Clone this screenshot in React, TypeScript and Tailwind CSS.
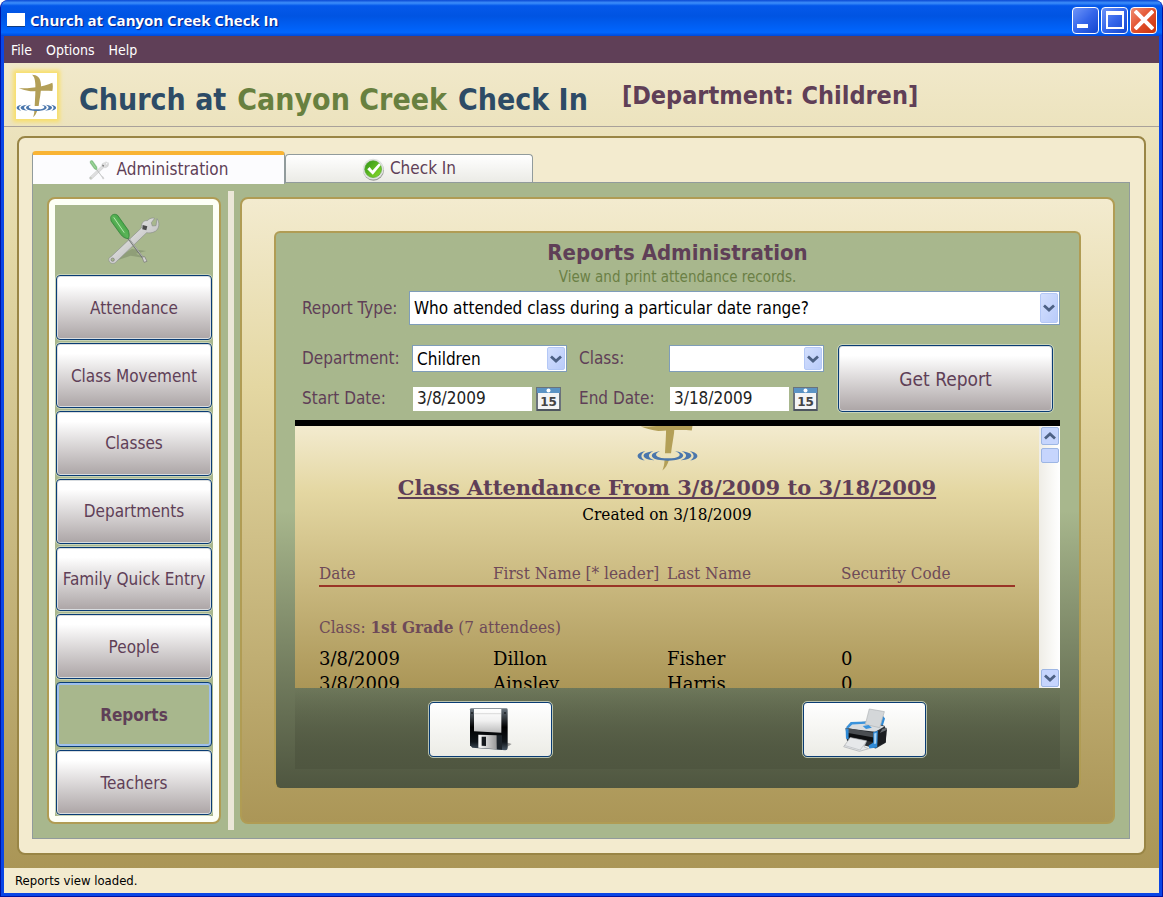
import React, { useState } from "react";

const SANS = "font-['DejaVu_Sans_Condensed','DejaVu_Sans',sans-serif]";

function Cross({ className, viewBox }: { className: string; viewBox: string }) {
  return (
    <svg className={className} viewBox={viewBox} aria-hidden="true">
      <path d="M97 226 C112 226 123 234 124 256 C125 280 119 300 117 320 L105 320 C106 300 108 275 107 255 C106 240 104 232 97 226Z" fill="#b39f57" />
      <path d="M57 267 C90 267 130 264 158 250 C160 256 160 266 158 275 C135 273 110 275 92 276 C80 274 68 271 57 267Z" fill="#b39f57" />
      <path d="M104 334 L113 333 C110 343 106 350 100 354 C103 346 104 340 104 334Z" fill="#b39f57" />
      <g fill="#4a76ac">
        <path d="M95 316 C74 318 72 332 100 334 C106 335 116 335 122 334 C148 331 146 318 125 316 C140 321 136 329 118 330 L104 330 C86 329 82 321 95 316Z" />
        <path d="M82 316 C56 318 56 332 84 334 C70 329 70 321 82 316Z" />
        <path d="M138 316 C164 318 164 332 136 334 C150 329 150 321 138 316Z" />
        <path d="M66 316 C46 319 46 331 65 334 C56 329 56 321 66 316Z" />
        <path d="M154 316 C174 319 174 331 155 334 C164 329 164 321 154 316Z" />
      </g>
    </svg>
  );
}

function Tools({ className, shadow }: { className: string; shadow?: boolean }) {
  return (
    <svg className={className} viewBox="328 98 156 156" aria-hidden="true">
      <defs>
        <linearGradient id="steel" x1="0" y1="0" x2="1" y2="1">
          <stop offset="0" stopColor="#fafafa" />
          <stop offset="1" stopColor="#a9a9a9" />
        </linearGradient>
        <linearGradient id="grip" x1="0" y1="1" x2="1" y2="0">
          <stop offset="0" stopColor="#1f7a2a" />
          <stop offset="0.5" stopColor="#5cb558" />
          <stop offset="1" stopColor="#1f8a2c" />
        </linearGradient>
      </defs>
      {shadow && <path d="M352 232 L400 206 L442 212 L412 220 L442 234 L396 226 L356 240Z" fill="#7f8d6a" opacity="0.6" />}
      <path d="M337 229 L428 143 C427 131 434 119 446 121 C452 114 462 111 468 114 L458 127 L461 137 L472 136 L475 115 C484 126 482 146 470 153 C460 159 450 158 444 157 L353 244 C348 252 335 251 331 242 C329 236 331 231 337 229Z" fill="url(#steel)" stroke="#8b8f8b" strokeWidth="2" />
      <circle cx="342" cy="238" r="5" fill="#a8b78d" stroke="#777" strokeWidth="2" />
      <path d="M432 134 L446 138 L443 150 L431 147Z" fill="#4c4c4c" />
      <path d="M388 173 L434 234" stroke="#6f7370" strokeWidth="5" />
      <path d="M390 174 L434 232" stroke="#d6d8d6" strokeWidth="2" />
      <path d="M430 230 L438 229 L445 243 L436 246Z" fill="#d2d2d2" stroke="#777" strokeWidth="2" />
      <path d="M336 112 C337 102 350 99 357 105 L389 150 C392 160 393 168 389 175 C380 175 372 170 366 162 L337 122Z" fill="url(#grip)" stroke="#267b30" strokeWidth="2" />
      <path d="M346 112 L376 156" stroke="#b5e6ae" strokeWidth="3" strokeLinecap="round" />
    </svg>
  );
}

function CheckBadge() {
  return (
    <svg className="size-[23px]" viewBox="0 0 66 66" aria-hidden="true">
      <defs>
        <linearGradient id="go" x1="0" y1="0" x2="1" y2="1">
          <stop offset="0" stopColor="#2f9416" />
          <stop offset="1" stopColor="#8bdc2b" />
        </linearGradient>
      </defs>
      <circle cx="33" cy="35" r="30" fill="#9a9c98" />
      <circle cx="32" cy="32" r="30" fill="#dfe2df" />
      <circle cx="32" cy="32" r="24" fill="url(#go)" stroke="#52a32e" strokeWidth="2" />
      <path d="M15 32 L22 26 L30 36 L49 15 L54 20 L31 48Z" fill="#fff" />
    </svg>
  );
}

function CalendarIcon() {
  return (
    <svg className="h-6 w-[25px]" viewBox="0 0 25 24" aria-hidden="true">
      <rect x="1" y="1" width="23" height="22" fill="#f3f4f5" stroke="#6a727a" strokeWidth="2" />
      <path d="M1 23 H24" stroke="#4e565e" strokeWidth="2" />
      <rect x="1" y="1" width="23" height="5" fill="#5b93c4" />
      <circle cx="12.500" cy="3.500" r="2" fill="#fff" />
      <text x="12.500" y="19" textAnchor="middle" fontSize="12" fontWeight="bold" fontFamily="DejaVu Sans" fill="#444">15</text>
    </svg>
  );
}

function Floppy() {
  return (
    <svg className="h-11 w-[43px]" viewBox="0 0 129 132" aria-hidden="true">
      <defs>
        <linearGradient id="disk" x1="0" y1="0" x2="0" y2="1">
          <stop offset="0" stopColor="#6b7680" />
          <stop offset="0.45" stopColor="#000" />
          <stop offset="0.8" stopColor="#10151a" />
          <stop offset="1" stopColor="#4a5866" />
        </linearGradient>
        <linearGradient id="label" x1="0" y1="0" x2="0" y2="1">
          <stop offset="0" stopColor="#fff" />
          <stop offset="0.5" stopColor="#f0f0f0" />
          <stop offset="1" stopColor="#bcbcbc" />
        </linearGradient>
        <linearGradient id="shutter" x1="0" y1="0" x2="1" y2="0">
          <stop offset="0" stopColor="#fff" />
          <stop offset="1" stopColor="#999" />
        </linearGradient>
      </defs>
      <path d="M104 124 L128 108 L116 104 L96 112Z" fill="#777" opacity="0.7" />
      <path d="M3 4 Q3 1 7 1 L112 1 Q116 1 116 5 L116 120 Q116 127 109 127 L10 119 L3 112Z" fill="url(#disk)" />
      <path d="M15 3 L97 3 L97 74 L15 70Z" fill="url(#label)" />
      <path d="M16 17 H96" stroke="#ccc" strokeWidth="2" />
      <path d="M28 80 L83 82 L83 124 L28 119Z" fill="url(#shutter)" />
      <path d="M38 86 L51 86 L51 114 L38 113Z" fill="#15191d" />
      <path d="M84 82 L99 82 L99 125 L84 124Z" fill="#1d242b" />
      <circle cx="9" cy="15" r="3" fill="#1c2024" />
      <circle cx="108" cy="15" r="3" fill="#1c2024" />
    </svg>
  );
}

function Printer() {
  return (
    <svg className="h-11 w-11" viewBox="192 108 134 134" aria-hidden="true">
      <path d="M300 140 L314 132 L320 140 L312 166 L300 166Z" fill="#2f8ad6" />
      <path d="M200 170 L216 152 L262 150 L318 162 L325 176 L322 214 L292 231 L204 208Z" fill="#2b2f34" />
      <path d="M200 170 L216 152 L264 150 L318 164 L290 180Z" fill="#d9dde0" />
      <path d="M202 166 L216 151 L262 149 L260 156 L220 158 L206 172Z" fill="#3a93dc" />
      <path d="M272 111 L318 119 L304 168 L260 158Z" fill="#d4d7d9" stroke="#aeb2b5" strokeWidth="2" />
      <path d="M252 163 L270 160 L280 168 L262 172Z" fill="#3a93dc" />
      <path d="M200 170 L210 170 L286 184 L288 206 L206 192Z" fill="#4a4e52" />
      <path d="M208 184 L286 198 L286 212 L208 196Z" fill="#0d0f11" />
      <path d="M200 170 L209 172 L209 204 L201 201Z" fill="#2f8ad6" />
      <path d="M284 182 L298 177 L296 228 L272 231 L270 222 L284 214Z" fill="#2f8ad6" />
      <path d="M287 186 L294 183 L293 216 L287 218Z" fill="#a9d4f5" />
      <path d="M300 178 L325 170 L322 212 L298 224Z" fill="#1b1d20" />
      <path d="M312 172 L325 168 L323 176 L304 184Z" fill="#666b70" />
      <path d="M214 198 L264 208 L256 226 L270 232 L242 240 L194 226Z" fill="#e6e8ea" stroke="#a6aaad" strokeWidth="2" />
      <path d="M196 222 L244 236 L262 212" fill="none" stroke="#b5b9bc" strokeWidth="2" />
    </svg>
  );
}

function Chevron({ up }: { up?: boolean }) {
  return (
    <svg className="h-2 w-3" viewBox="0 0 12 8" aria-hidden="true">
      <path d={up ? "M1 6.500 L6 2 L11 6.500" : "M1 1.500 L6 6 L11 1.500"} fill="none" stroke="#4d6185" strokeWidth="2.800" />
    </svg>
  );
}

function Combo({ id, options, className }: { id: string; options: string[]; className: string }) {
  return (
    <div className={`relative ${className}`}>
      <select id={id} className="size-full appearance-none border border-[#7f9db9] bg-white pt-px pr-6 pl-1 text-black">
        {options.map((o) => (
          <option key={o}>{o}</option>
        ))}
      </select>
      <span className="pointer-events-none absolute inset-y-[2px] right-[2px] flex w-[18px] items-center justify-center rounded-xs border border-[#b4c8f6] bg-linear-to-br from-[#d3dffd] to-[#b9cbfa]">
        <Chevron />
      </span>
    </div>
  );
}

function DateField({ id, value }: { id: string; value: string }) {
  return (
    <div className="flex items-center gap-1 pl-px">
      <input id={id} defaultValue={value} className="h-6 w-[119px] bg-white px-1 text-[#222]" />
      <button type="button" aria-label="Open calendar">
        <CalendarIcon />
      </button>
    </div>
  );
}

const glossy =
  "rounded-[4px] border border-[#0a3c74] bg-linear-to-b from-white from-15% to-[#aca5a6] pt-[2px] text-[#5f3f57] outline outline-[#c8d3b8] inset-ring inset-ring-[#d9dde0]";
const iconButton =
  "flex h-[55px] w-[123px] items-center justify-center rounded-[4px] border border-[#0a3c74] bg-linear-to-b from-white to-[#ecece6] outline outline-[#b9c2ae]";
const views = ["Attendance", "Class Movement", "Classes", "Departments", "Family Quick Entry", "People", "Reports", "Teachers"];

function TitleBar() {
  const button = "flex size-[27px] items-center justify-center rounded-[4px] border border-white";
  const blue = "bg-linear-to-br from-[#6f94f8] via-[#3566ea] to-[#1346cf]";
  return (
    <header className="flex h-9 items-center gap-1 rounded-t-lg bg-[linear-gradient(to_bottom,#0a48d4,#3d8ffb_8%,#0458ea_16%,#0054e2_45%,#0066ff_90%,#0048d8)] px-[5px] pt-1">
      <svg className="h-4 w-5" viewBox="0 0 20 16" aria-hidden="true">
        <rect x="1" y="1" width="18" height="14" fill="#103c80" />
        <rect x="1" y="1" width="18" height="13" fill="#fff" />
      </svg>
      <span className="flex-1 font-['Open_Sans',sans-serif] text-[15px] font-bold text-white [text-shadow:1px_1px_1px_#0a1883]">
        Church at Canyon Creek Check In
      </span>
      <div className="flex gap-[2px]">
        <button type="button" aria-label="Minimize" className={`${button} ${blue}`}>
          <svg className="size-5" viewBox="0 0 20 20"><rect x="1" y="14" width="11" height="4" fill="#fff" /></svg>
        </button>
        <button type="button" aria-label="Maximize" className={`${button} ${blue}`}>
          <svg className="size-5" viewBox="0 0 20 20"><path d="M1 1 H19 V19 H1Z M3 5 V17 H17 V5Z" fill="#fff" fillRule="evenodd" /></svg>
        </button>
        <button type="button" aria-label="Close" className={`${button} bg-linear-to-br from-[#ee8d72] via-[#e2502c] to-[#c83205]`}>
          <svg className="size-5" viewBox="0 0 20 20"><path d="M1 1 L19 19 M19 1 L1 19" stroke="#fff" strokeWidth="4" /></svg>
        </button>
      </div>
    </header>
  );
}

function ReportSheet() {
  return (
    <div className="flex h-[268px] overflow-hidden border-t-[6px] border-black">
      <div className="min-w-0 flex-1 bg-linear-to-b from-[#f3ebcf] via-[#e4d7a2] via-25% to-[#ab9657] px-6 font-['DejaVu_Serif_Condensed','DejaVu_Serif',serif] text-[17px] leading-6 text-black">
        <Cross className="mx-auto h-12 w-[63px]" viewBox="48 266 124 95" />
        <h2 className="text-center font-['DejaVu_Serif',serif] text-[21px] leading-7 font-bold text-[#5f3f57] underline">
          Class Attendance From 3/8/2009 to 3/18/2009
        </h2>
        <p className="text-center">Created on 3/18/2009</p>
        <table className="mt-[35px] w-full table-fixed text-left">
          <thead className="whitespace-nowrap text-[#6e4a58]">
            <tr className="border-b-2 border-[#9a3426]">
              <th className="font-normal">Date</th>
              <th className="font-normal">First Name [* leader]</th>
              <th className="font-normal">Last Name</th>
              <th className="font-normal">Security Code</th>
            </tr>
          </thead>
          <tbody className="font-['DejaVu_Serif',serif] text-[18px] leading-[25px]">
            <tr className="font-['DejaVu_Serif_Condensed','DejaVu_Serif',serif] text-[17px] text-[#6e4a58]">
              <td colSpan={4} className="pt-7 pb-[6px]">
                Class: <b>1st Grade</b> (7 attendees)
              </td>
            </tr>
            <tr><td>3/8/2009</td><td>Dillon</td><td>Fisher</td><td>0</td></tr>
            <tr><td>3/8/2009</td><td>Ainsley</td><td>Harris</td><td>0</td></tr>
          </tbody>
        </table>
      </div>
      <div className="flex w-[21px] flex-col items-center gap-[3px] bg-linear-to-r from-[#efede6] to-white py-px">
        <button type="button" aria-label="Scroll up" className="flex h-[18px] w-[18px] items-center justify-center rounded-xs border border-[#9db6e4] bg-[#c6d5fd]">
          <Chevron up />
        </button>
        <span className="h-[15px] w-[18px] rounded-xs border border-[#9db6e4] bg-[#c6d5fd]" />
        <button type="button" aria-label="Scroll down" className="mt-auto flex h-[18px] w-[18px] items-center justify-center rounded-xs border border-[#9db6e4] bg-[#c6d5fd]">
          <Chevron />
        </button>
      </div>
    </div>
  );
}

export default function App() {
  const [view, setView] = useState("Reports");
  return (
    <div className={`flex min-h-screen flex-col rounded-t-lg border-x border-b border-[#0012a0] bg-[#0a46e6] ${SANS} text-[17px]`}>
      <TitleBar />
      <div className="mx-[3px] mb-[3px] flex flex-1 flex-col bg-linear-to-b from-[#f3ebcf] via-[#e3d8a6] via-25% to-[#a89353]">
        <nav className="flex h-[27px] items-center gap-[14px] bg-[#5f3f57] px-[7px] pt-px text-[14px] text-white">
          <button type="button">File</button>
          <button type="button">Options</button>
          <button type="button">Help</button>
        </nav>
        <div className="flex h-16 items-center border-b border-[#a9a19a] pt-[2px] pl-3 font-bold">
          <div className="bg-white shadow-[0_0_4px_3px_#f8df6c]">
            <Cross className="h-[46px] w-[41px]" viewBox="49 221 123 138" />
          </div>
          <h1 className="flex gap-[11px] pt-2 pl-[22px] text-[30px] text-[#2d4b66]">
            <span>Church at</span>
            <span className="text-[#68803f]">Canyon Creek</span>
            <span>Check In</span>
          </h1>
          <p className="pl-[34px] text-[25px] text-[#5f3f57]">[Department: Children]</p>
        </div>
        <div className="mx-[13px] mt-[9px] mb-[13px] flex flex-1 flex-col rounded-lg border-2 border-[#998545] bg-[#f3ebcf] pt-[13px] pr-[14px] pb-[14px] pl-[13px]">
          <div className="flex items-end text-[#5f3f57]" role="tablist">
            <button type="button" role="tab" aria-selected="true" className="relative z-10 -mb-[2px] flex h-[33px] w-[253px] items-center justify-center gap-2 rounded-t-[4px] border-x border-t-4 border-x-[#919b9c] border-t-[#f9b434] bg-[#fcfcfe]">
              <Tools className="size-5 opacity-70" />
              Administration
            </button>
            <button type="button" role="tab" aria-selected="false" className="flex h-7 w-[248px] items-center justify-center gap-[5px] rounded-t-[4px] border border-b-0 border-[#919b9c] bg-linear-to-b from-white to-[#ebebe6] pt-px">
              <CheckBadge />
              Check In
            </button>
          </div>
          <div className="flex flex-1 border border-[#919b9c] bg-[#a8b78d] px-[14px] py-2">
            <aside className="my-[6px] w-[174px] rounded-lg border-2 border-[#b09c54] bg-[#fdfff6] p-[6px]">
              <div className="flex h-full flex-col gap-[3px] bg-[#a8b78d] px-px pb-px">
                <div className="flex h-[67px] items-center justify-center">
                  <Tools className="size-[52px]" shadow />
                </div>
                {views.map((v) => (
                  <button
                    key={v}
                    type="button"
                    onClick={() => setView(v)}
                    className={
                      v === view
                        ? "min-h-16 flex-1 rounded-[4px] border border-[#0a3c74] bg-[#a8b78d] pt-[2px] font-bold text-[#5f3f57] inset-ring-2 inset-ring-[#9dbfec]"
                        : `min-h-16 flex-1 whitespace-nowrap ${glossy}`
                    }
                  >
                    {v}
                  </button>
                ))}
              </div>
            </aside>
            <div className="mr-[6px] ml-[7px] w-[6px] bg-[#ebe7d8]" />
            <main className="my-[6px] min-w-0 flex-1 rounded-lg border-2 border-[#b09c54] bg-linear-to-b from-[#f3ebcf] via-[#e4d7a2] via-30% to-[#ab9657] px-8 pt-8 pb-[34px]">
              <section className="h-full rounded-md border-2 border-b-0 border-[#b09c54] bg-linear-to-b from-[#a8b78d] from-50% to-[#4f5640] px-[19px] pt-1">
                <h2 className="text-center text-[22px] leading-8 font-bold text-[#5f3f57]">Reports Administration</h2>
                <p className="text-center text-[15px] leading-4 text-[#6b8045]">View and print attendance records.</p>
                <div className="mt-[6px] flex items-center pl-[7px] text-[#5f3f57]">
                  <label htmlFor="type" className="w-[107px] pt-px">Report Type:</label>
                  <Combo id="type" className="h-[34px] flex-1" options={["Who attended class during a particular date range?"]} />
                </div>
                <div className="mt-5 mb-2 flex items-center px-[7px] text-[#5f3f57]">
                  <div className="grid grid-cols-[110px_155px_102px_155px] items-center gap-y-[14px]">
                    <label htmlFor="dept">Department:</label>
                    <Combo id="dept" className="h-[27px]" options={["Children"]} />
                    <label htmlFor="class" className="pl-3">Class:</label>
                    <Combo id="class" className="h-[27px]" options={[""]} />
                    <label htmlFor="start">Start Date:</label>
                    <DateField id="start" value="3/8/2009" />
                    <label htmlFor="end" className="pl-3">End Date:</label>
                    <DateField id="end" value="3/18/2009" />
                  </div>
                  <button type="button" className={`ml-[14px] h-[67px] flex-1 text-[19px] ${glossy}`}>Get Report</button>
                </div>
                <ReportSheet />
                <div className="grid h-[81px] grid-cols-2 justify-items-center bg-linear-to-b from-[#4f5640]/0 to-[#4f5640] px-2 pt-[14px]">
                  <button type="button" aria-label="Save report" className={iconButton}>
                    <Floppy />
                  </button>
                  <button type="button" aria-label="Print report" className={iconButton}>
                    <Printer />
                  </button>
                </div>
              </section>
            </main>
          </div>
        </div>
        <footer className="flex h-[25px] items-center bg-[#f3ebcf] pl-[11px] text-[13px] text-black">Reports view loaded.</footer>
      </div>
    </div>
  );
}
